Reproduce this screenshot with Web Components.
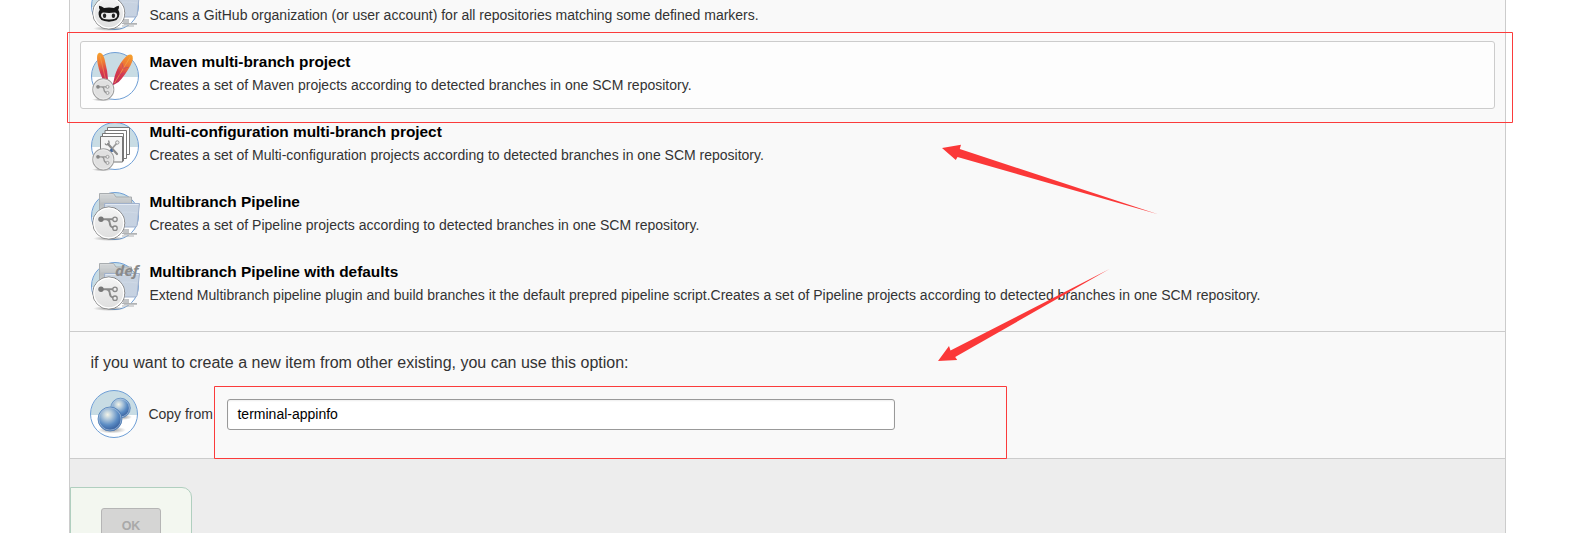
<!DOCTYPE html>
<html lang="en">
<head>
<meta charset="utf-8">
<title>New Item</title>
<style>
html,body{margin:0;padding:0;background:#fff;height:533px;overflow:hidden}
body{font-family:"Liberation Sans",Arial,sans-serif;font-size:14px;color:#333}
</style>
</head>
<body>
<new-item-page>
  <item-row kind="github" name="">Scans a GitHub organization (or user account) for all repositories matching some defined markers.</item-row>
  <item-row kind="maven" name="Maven multi-branch project" selected>Creates a set of Maven projects according to detected branches in one SCM repository.</item-row>
  <item-row kind="matrix" name="Multi-configuration multi-branch project">Creates a set of Multi-configuration projects according to detected branches in one SCM repository.</item-row>
  <item-row kind="pipeline" name="Multibranch Pipeline">Creates a set of Pipeline projects according to detected branches in one SCM repository.</item-row>
  <item-row kind="defaults" name="Multibranch Pipeline with defaults">Extend Multibranch pipeline plugin and build branches it the default prepred pipeline script.Creates a set of Pipeline projects according to detected branches in one SCM repository.</item-row>
  <copy-from slot="copy" value="terminal-appinfo"></copy-from>
  <submit-bar slot="footer">OK</submit-bar>
</new-item-page>
<page-marks></page-marks>
<script>
const DEFS = `<defs>
<linearGradient id="feather" x1="0" y1="0" x2="0" y2="1"><stop offset="0" stop-color="#f6a22c"/><stop offset=".3" stop-color="#ee7a35"/><stop offset=".6" stop-color="#d83a4c"/><stop offset="1" stop-color="#b82a5c"/></linearGradient>
<linearGradient id="metal" x1="0" y1="0" x2="0" y2="1"><stop offset="0" stop-color="#d9dcdd"/><stop offset=".5" stop-color="#b8bcbe"/><stop offset="1" stop-color="#d4d6d7"/></linearGradient>
<linearGradient id="blue" x1="0" y1="0" x2="1" y2="1"><stop offset="0" stop-color="#c9d3df"/><stop offset="1" stop-color="#c6d2e2"/></linearGradient>
<linearGradient id="disc" x1="0" y1="0" x2="0" y2="1"><stop offset="0" stop-color="#f5f5f5"/><stop offset="1" stop-color="#dedede"/></linearGradient>
<radialGradient id="ball" cx=".4" cy=".32" r=".62"><stop offset="0" stop-color="#f4f4e8"/><stop offset=".3" stop-color="#b5cbdc"/><stop offset=".7" stop-color="#5b8cc4"/><stop offset="1" stop-color="#3e68a5"/></radialGradient>
<radialGradient id="shade"><stop offset="0" stop-color="#555" stop-opacity=".6"/><stop offset="1" stop-color="#555" stop-opacity="0"/></radialGradient>
</defs>`;
const BASE = `<circle cx="24" cy="24" r="23.5" fill="#fff"/><path d="M.5 25a23.5 24.5 0 0 1 47 0z" fill="#c8dce4"/><circle cx="24" cy="24" r="23.5" fill="none" stroke="#6f9fd6"/>`;
const FORK = `<path d="M9.500 27.300H22M15 27.300q3.600.3 3.800 4t3.400 4.300" fill="none" stroke="#8a8a8a" stroke-width="2"/><circle cx="10" cy="27.300" r="2.700" fill="#777"/><circle cx="24" cy="27.300" r="2.200" fill="#eee" stroke="#888" stroke-width="1.300"/><circle cx="24" cy="36.200" r="2.200" fill="#eee" stroke="#888" stroke-width="1.300"/>`;
const DISC = `<ellipse cx="18" cy="46.500" rx="16" ry="2.500" fill="url(#shade)"/><circle cx="17.800" cy="31" r="16" fill="url(#disc)" stroke="#777"/><circle cx="17.800" cy="31" r="14.900" fill="none" stroke="#fff" stroke-width="1.300"/>`;
const SMALL = `<g transform="translate(.2 16.300) scale(.68)"><ellipse cx="16" cy="46" rx="15" ry="2.500" fill="url(#shade)"/><circle cx="17.800" cy="31" r="15.500" fill="#e0e0e0" stroke="#a2a2a2" stroke-width="1.500"/><circle cx="17.800" cy="31" r="14" fill="none" stroke="#ededed" stroke-width="1.200"/><g opacity=".85">${FORK}</g></g>`;
const FOLDER = `<path d="M30 37h8v4h8v2H33z" fill="#c2c4c6"/><path d="M31 41.500h15M31 44h12" stroke="#b0b2b4"/>
<path d="M8.500 1.500h14l2.500 3.500h15.500V23H8.500z" fill="url(#metal)" stroke="#a9adb0"/><path d="M10 4h12M10 6.500h28M10 9h30" stroke="#c9cdcf" stroke-width=".8"/><path d="M13.500 11.500h35l-2.500 22q-.2 1.500-2 1.500H13.500z" fill="url(#blue)" stroke="#a0b1cc"/><path d="M14.500 12.500h33" stroke="#e2e9f3"/><path d="M16 24q16-6 30-3" stroke="#d2dce8" fill="none" opacity=".7"/>`;
const CAT = `<g transform="translate(-.7 -.2) scale(1.050)"><path d="M8.300 22.900q-.3 2.500.7 3.700-1.300 1.700-1.100 4.400.1 6.900 9.900 7 9.800-.1 9.900-7 .1-2.700-1.100-4.400 1-1.300.6-3.700-2.600.2-4.700 2.100-4.600-.9-9.400 0-2.100-1.900-4.800-2.100z" fill="#171717"/><path d="M12.600 29.200q5.200.8 10.500 0 2.700.4 2.500 3.300-.4 3.300-7.800 3.500-7.200-.2-7.600-3.500-.2-2.900 2.400-3.300z" fill="#eaeaea"/><ellipse cx="13.600" cy="32.300" rx="1.600" ry="2.100" fill="#222"/><ellipse cx="22" cy="32.300" rx="1.600" ry="2.100" fill="#222"/></g>`;
const ICONS = {
  github: BASE + FOLDER + DISC + CAT,
  maven: BASE + `<g transform="translate(8.500 .8) rotate(-11)"><path d="M0 0Q3 .2 3.800 7Q4.600 19 3 31L0 32Q-2.800 26-3.700 15Q-4.600 0 0 0z" fill="url(#feather)"/><path d="M0 3L1 31" stroke="#f2a15c" stroke-width=".5"/></g><g transform="translate(40.500 2.800) rotate(31)"><path d="M0 0Q4 .5 4.700 10Q5 22 3 30L-.5 36L-2 31Q-5 24-5 13Q-4.500 0 0 0z" fill="url(#feather)"/><path d="M0 3L0 33" stroke="#f3a94d" stroke-width=".6"/><path d="M-4 12l4 4 4-4M-4 20l4 3 4-4" stroke="#b93f75" stroke-width=".5" fill="none"/></g>` + SMALL,
  matrix: BASE + `<g fill="#fff" stroke="#777"><path d="M16.500 5.500h22v27h-22z"/><path d="M14 8.500h21.500v28H14z"/><path d="M11.500 11.500h21v27.500h-21z"/><path d="M9.500 14.500h22V40h-22z" fill="#f4f4f4"/></g><path d="M17 22l9 10" stroke="#8a8a8a" stroke-width="2.200" stroke-linecap="round"/><path d="M26 21l-8 9" stroke="#999" stroke-width="1.800" stroke-linecap="round"/><path d="M17.500 18.500q1.500 3-.5 4t-3-1" stroke="#888" stroke-width="1.300" fill="none"/><circle cx="26.300" cy="20.500" r="1.700" fill="#eee" stroke="#999"/><path d="M17 30l4-4 1 4z" fill="#42669b"/>` + SMALL,
  pipeline: BASE + FOLDER + DISC + FORK,
  defaults: BASE + FOLDER + `<text x="24" y="13.500" font-family="Open Sans" font-size="14.500" font-weight="700" font-style="italic" fill="#8a8a8a" textLength="23.500" lengthAdjust="spacingAndGlyphs">def</text>` + DISC + FORK,
  copy: BASE + `<ellipse cx="33" cy="27" rx="9" ry="3" fill="url(#shade)"/><circle cx="30.500" cy="18" r="9.800" fill="url(#ball)" stroke="#5c8cc0" stroke-width=".8"/><circle cx="30.500" cy="18" r="8.900" fill="none" stroke="#b7cbe2" stroke-width=".7"/><ellipse cx="22" cy="40" rx="14" ry="3.500" fill="url(#shade)"/><circle cx="20" cy="29" r="12" fill="url(#ball)" stroke="#4f7fb8" stroke-width=".8"/><circle cx="20" cy="29" r="11.100" fill="none" stroke="#aac2dd" stroke-width=".7"/>`
};
class ItemIcon extends HTMLElement {
  constructor(){ super(); this.attachShadow({mode:"open"}); }
  connectedCallback(){
    this.shadowRoot.innerHTML = `<style>:host{display:block;flex:none;width:48px;height:48px}svg{display:block;overflow:visible}</style><svg width="48" height="48" viewBox="0 0 48 48">${DEFS}${ICONS[this.getAttribute("kind")]}</svg>`;
  }
}
class ItemRow extends HTMLElement {
  constructor(){ super(); this.attachShadow({mode:"open"}); }
  connectedCallback(){
    this.shadowRoot.innerHTML = `<style>
:host{display:flex;box-sizing:border-box;height:68px;padding:10px;border:1px solid transparent;border-radius:3px;gap:10.4px}
:host([selected]){background:#fdfdfd;border-color:#ccc}
.t{white-space:nowrap}
b{display:block;height:20px;font-size:15.4px;line-height:20px;color:#000}
p{margin:4px 0 0;line-height:18px}
</style><item-icon kind="${this.getAttribute("kind")}"></item-icon><div class="t"><b>${this.getAttribute("name")}</b><p><slot></slot></p></div>`;
  }
}
class CopyFrom extends HTMLElement {
  constructor(){ super(); this.attachShadow({mode:"open"}); }
  connectedCallback(){
    this.shadowRoot.innerHTML = `<style>
:host{display:block;flex:none;box-sizing:border-box;height:128px;border-top:1px solid #ccc;border-bottom:1px solid #ccc;padding:20px 0 0 20px}
.q{font-size:16px;line-height:22px;padding-left:.5px}
.r{display:flex;align-items:center;height:48px;margin-top:16px}
label{padding-left:10.400px;width:68.600px;white-space:nowrap}
input{box-sizing:border-box;width:668px;height:31px;margin:0 0 0 10px;border:1px solid #999;border-radius:3px;padding:0 9.500px;background:#fff;font:14px "Liberation Sans",Arial,sans-serif;color:#000;box-shadow:inset 0 1px 2px #eee}
</style><div class="q">if you want to create a new item from other existing, you can use this option:</div>
<div class="r"><item-icon kind="copy"></item-icon><label for="from">Copy from</label><input id="from" value="${this.getAttribute("value")}"></div>`;
  }
}
class SubmitBar extends HTMLElement {
  constructor(){ super(); this.attachShadow({mode:"open"}); }
  connectedCallback(){
    this.shadowRoot.innerHTML = `<style>
:host{display:block;padding-top:28px}
.b{box-sizing:border-box;width:122px;height:80px;border:1px solid #b0cfbf;border-radius:0 10px 0 0;background:#f3f7f0;padding:20px 30px}
button{display:block;box-sizing:border-box;width:60px;height:36px;margin:0;padding:0;border:1px solid #b5b5b5;border-radius:3px;background:#d5d5d4;color:#a9a9a9;font:bold 12.5px "Liberation Sans",Arial,sans-serif}
</style><div class="b"><button><slot></slot></button></div>`;
  }
}
class NewItemPage extends HTMLElement {
  constructor(){ super(); this.attachShadow({mode:"open"}); }
  connectedCallback(){
    this.shadowRoot.innerHTML = `<style>
:host{display:flex;flex-direction:column;box-sizing:border-box;width:1437px;height:533px;margin-left:69px;border:solid #ccc;border-width:0 1px;background:#f9f9f9;overflow:hidden}
.list{display:flex;flex-direction:column;flex:none;gap:2px;margin:-29px 10px 12px 10px}
.foot{flex:1 0 0;min-height:0;background:#ededed}
</style><div class="list"><slot></slot></div><slot name="copy"></slot><div class="foot"><slot name="footer"></slot></div>`;
  }
}
class PageMarks extends HTMLElement {
  constructor(){ super(); this.attachShadow({mode:"open"}); }
  connectedCallback(){
    this.shadowRoot.innerHTML = `<style>:host{position:absolute;left:0;top:0;pointer-events:none}svg{display:block}</style>
<svg width="1582" height="533"><g fill="none" stroke="#fb3b3b"><path d="M67.500 32.500h1445v90h-1445z"/><path d="M214.500 386.500h792v72h-792z"/></g>
<g fill="#fb3838"><path d="M942 148l19-3.200-1.200 4.200L1158 214.200 957.500 157l-1.700 3z"/><path d="M938 361l11-15 1.500 4.500L1109.500 269 955.200 357l2 3z"/></g></svg>`;
  }
}
customElements.define("item-icon", ItemIcon);
customElements.define("item-row", ItemRow);
customElements.define("copy-from", CopyFrom);
customElements.define("submit-bar", SubmitBar);
customElements.define("new-item-page", NewItemPage);
customElements.define("page-marks", PageMarks);
</script>
</body>
</html>
